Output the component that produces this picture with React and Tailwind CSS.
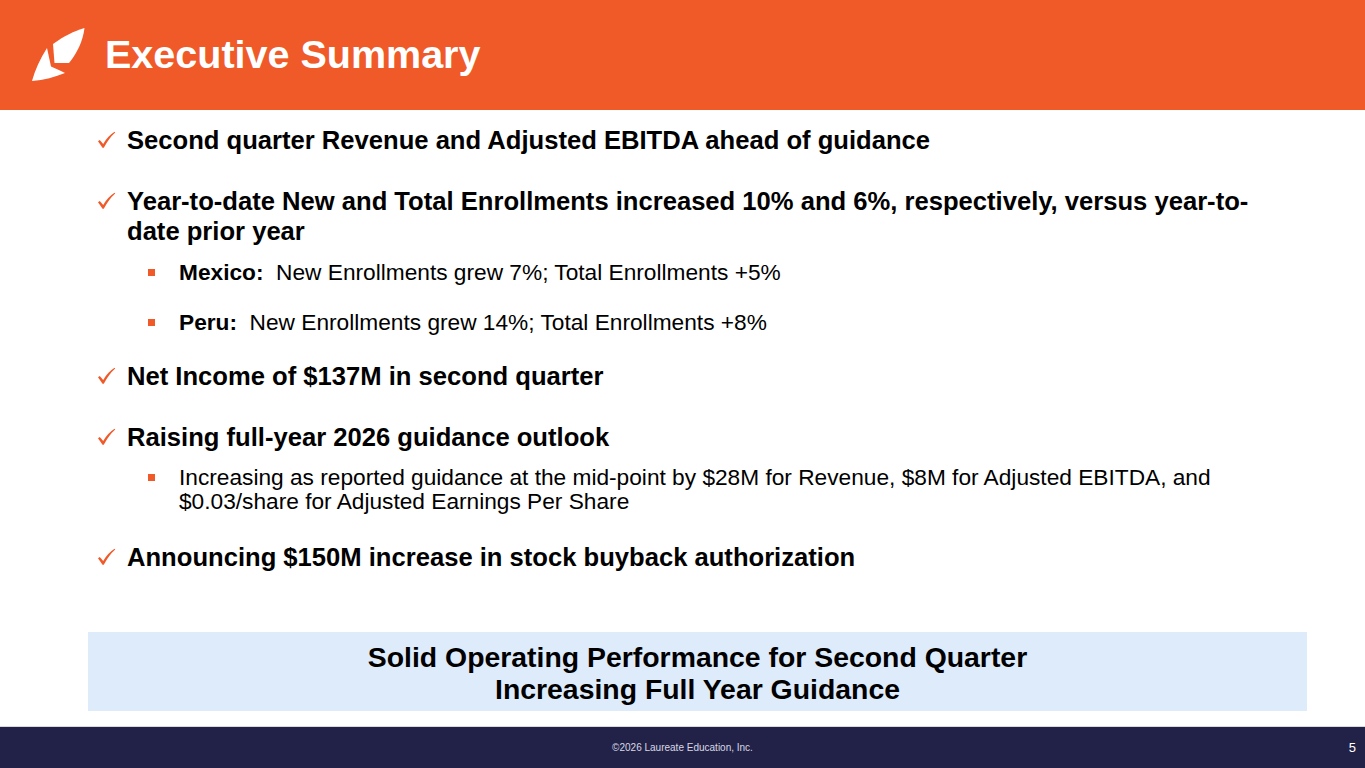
import React from "react";

const font = { fontFamily: '"Liberation Sans", Arial, sans-serif' };

function Check() {
  return (
    <svg width="19" height="18" viewBox="0 0 19 18" className="shrink-0">
      <path d="M1 10.3 L2.8 9 L6.2 13 Q10.5 5.3 17.6 0.8 L18.2 1.5 Q11.8 7.2 6.8 16.8 L5.5 16.8 Z" fill="#F05A28" />
    </svg>
  );
}

function Square() {
  return <span className="block w-[7px] h-[7px] bg-[#F05A28] shrink-0" />;
}

function Main({ children, className = "" }) {
  return (
    <div className={"flex items-start " + className}>
      <div className="w-[30px] h-[30px] flex items-center">
        <Check />
      </div>
      <div className="text-[25.6px] leading-[30px] font-bold text-black">{children}</div>
    </div>
  );
}

function Sub({ children, className = "" }) {
  return (
    <div className={"flex items-start pl-[51px] " + className}>
      <div className="w-[31px] h-[24px] flex items-center">
        <Square />
      </div>
      <div className="text-[22.7px] leading-[24px] text-black">{children}</div>
    </div>
  );
}

export default function App() {
  return (
    <div className="w-[1365px] h-[768px] bg-white flex flex-col overflow-hidden" style={font}>
      <div className="h-[110px] bg-[#F05A28] flex items-center shrink-0">
        <svg width="60" height="60" viewBox="25 25 60 60" className="ml-[25px] mb-[2px]">
          <path d="M53 45 C64 37 74 32 84.5 29 C83 42 77 54 69 64 L54.5 64 Z" fill="#fff" />
          <path d="M47 49 C40 60 35 71 32 82 C44 81 55 78 65 74 L61 72 L51 67.5 Z" fill="#fff" />
        </svg>
        <div className="ml-[20px] text-white font-bold text-[39.5px] leading-none">Executive Summary</div>
      </div>

      <div className="pl-[97px] pt-[15px] flex flex-col">
        <Main>Second quarter Revenue and Adjusted EBITDA ahead of guidance</Main>
        <Main className="mt-[31px]">
          Year-to-date New and Total Enrollments increased 10% and 6%, respectively, versus year-to-
          <br />
          date prior year
        </Main>
        <Sub className="mt-[14px]">
          <span className="font-bold">Mexico:</span>&nbsp; New Enrollments grew 7%; Total Enrollments +5%
        </Sub>
        <Sub className="mt-[26px]">
          <span className="font-bold">Peru:</span>&nbsp; New Enrollments grew 14%; Total Enrollments +8%
        </Sub>
        <Main className="mt-[27px]">Net Income of $137M in second quarter</Main>
        <Main className="mt-[31px]">Raising full-year 2026 guidance outlook</Main>
        <Sub className="mt-[13px]">
          Increasing as reported guidance at the mid-point by $28M for Revenue, $8M for Adjusted EBITDA, and
          <br />
          $0.03/share for Adjusted Earnings Per Share
        </Sub>
        <Main className="mt-[29px]">Announcing $150M increase in stock buyback authorization</Main>
      </div>

      <div className="flex-1" />

      <div className="ml-[88px] w-[1219px] h-[79px] bg-[#DDEBFB] pt-[9px] text-center text-[28.4px] leading-[32px] font-bold text-black shrink-0">
        Solid Operating Performance for Second Quarter
        <br />
        Increasing Full Year Guidance
      </div>

      <div className="h-[15px] shrink-0" />
      <div className="h-px bg-[#d9d9d9] shrink-0" />
      <div className="h-[41px] bg-[#222248] shrink-0 relative flex items-center justify-center">
        <span className="text-[10px] text-[#d8d8e4]">©2026 Laureate Education, Inc.</span>
        <span className="absolute right-[9px] text-[13px] text-white">5</span>
      </div>
    </div>
  );
}
